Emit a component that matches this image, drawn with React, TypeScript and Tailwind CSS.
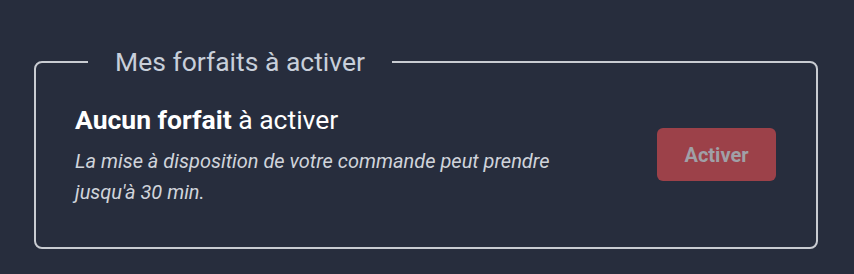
import React from "react";

export default function App() {
  return (
    <div
      className="min-h-[274px] w-full bg-[#272d3d] pt-[46px] pl-[34px] pr-[36px] pb-[26px]"
      style={{ fontFamily: "Roboto, 'Noto Sans', sans-serif" }}
    >
      <fieldset className="rounded-[8px] border-2 border-[#c9ccd2] pl-[39px] pr-[40px] pt-[27px] pb-[39px]">
        <legend className="ml-[13px] px-[27px] text-[26.5px] leading-[31px] text-[#c8cfda]">
          Mes forfaits à activer
        </legend>
        <div className="flex items-start justify-between">
          <div>
            <h2 className="text-[26.5px] leading-[31px] text-white">
              <span className="font-bold">Aucun forfait</span> à activer
            </h2>
            <p className="mt-[11px] text-[20px] italic leading-[31px] text-[#d0d4db]">
              La mise à disposition de votre commande peut prendre
              <br />
              jusqu'à 30 min.
            </p>
          </div>
          <button className="mt-[24px] h-[53px] w-[119px] rounded-[6px] bg-[#9c4149] text-[20px] font-bold text-[#a0a0a7]">
            Activer
          </button>
        </div>
      </fieldset>
    </div>
  );
}
